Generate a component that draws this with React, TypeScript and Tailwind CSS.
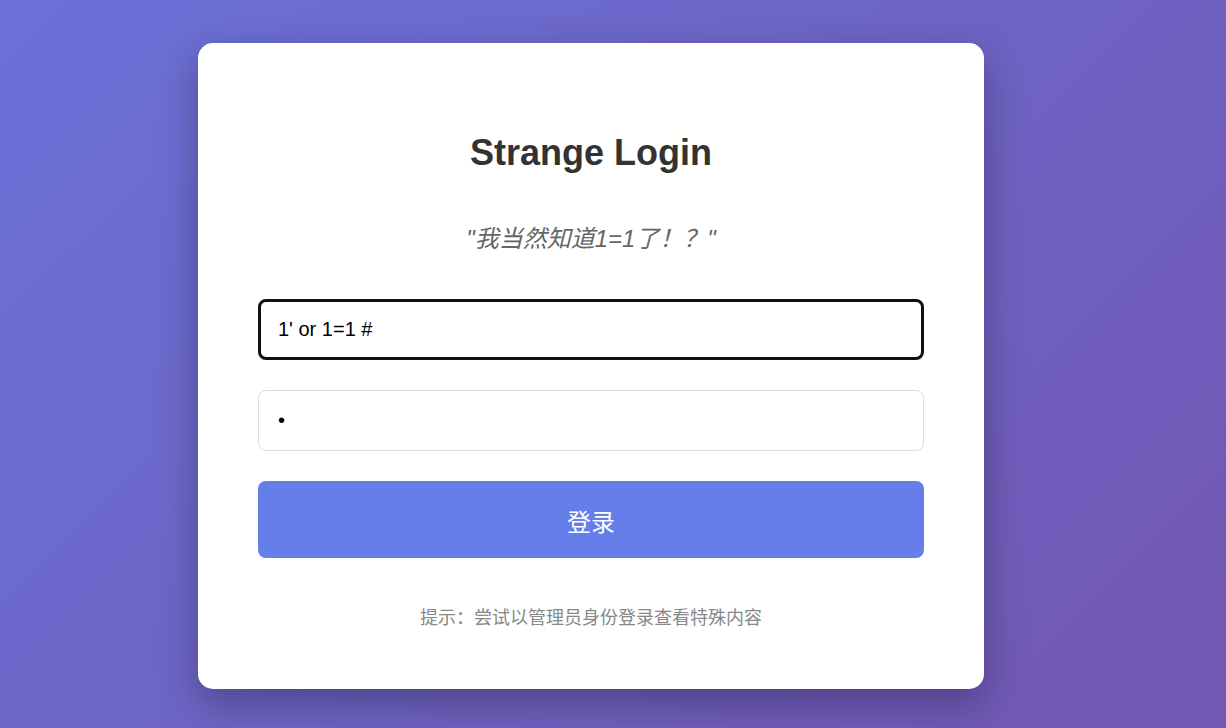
export default function App() {
  return (
    <main className="flex min-h-screen items-center justify-center bg-[linear-gradient(135deg,#667eea_-50%,#764ba2_146%)] pr-11 pt-1 font-['Liberation_Sans','Noto_Sans_CJK_SC',sans-serif]">
      <form
        className="w-full max-w-[786px] rounded-[15px] bg-white px-[60px] pb-[57px] pt-[86px] text-center shadow-[0_15px_40px_rgba(0,0,0,0.3)]"
        onSubmit={(event) => event.preventDefault()}
      >
        <h1 className="text-4xl leading-12 font-bold text-[#333333]">Strange Login</h1>
        <p className="mt-11 text-2xl leading-9 text-[#666666] italic">"我当然知道1=1了！？"</p>
        <input
          type="text"
          aria-label="用户名"
          defaultValue="1' or 1=1 #"
          className="mt-[42px] block h-[61px] w-full rounded-lg border-[3px] border-[#101010] bg-white px-[17px] text-xl text-black outline-none"
        />
        <input
          type="password"
          aria-label="密码"
          defaultValue="1"
          className="mt-[30px] block h-[61px] w-full rounded-lg border border-[#dddddd] bg-white px-[19px] text-xl text-black outline-none"
        />
        <button
          type="submit"
          className="mt-[30px] block h-[77px] w-full cursor-pointer rounded-lg bg-[#667eea] pt-1.5 text-2xl text-white"
        >
          登录
        </button>
        <p className="mt-[46px] text-lg leading-7 text-[#888888]">提示：尝试以管理员身份登录查看特殊内容</p>
      </form>
    </main>
  );
}
